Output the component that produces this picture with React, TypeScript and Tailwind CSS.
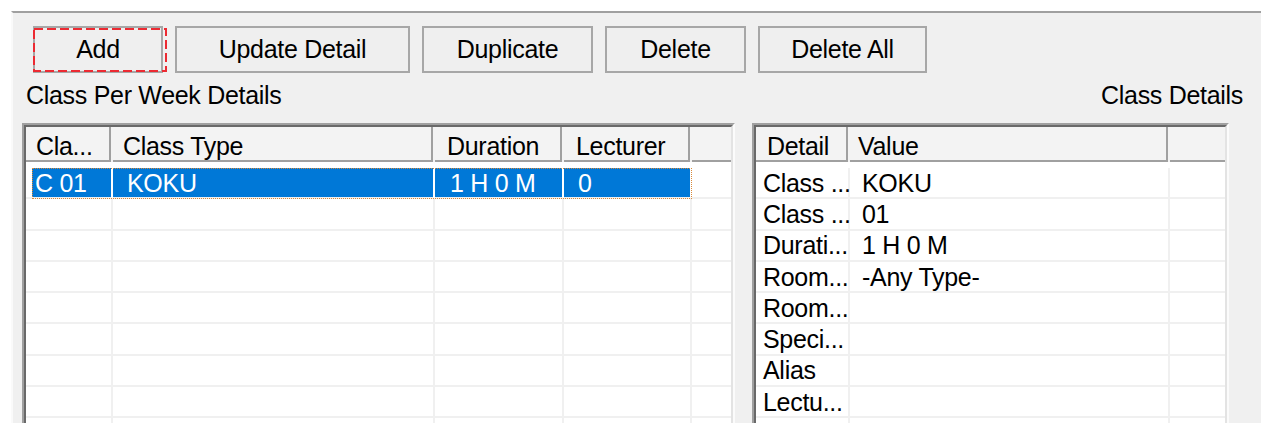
const GRID = 'border-[#f0f0f0]';

function ToolButton({ label, width }: { label: string; width: string }) {
  return (
    <button className={`${width} h-[47px] shrink-0 border-2 border-[#a7a7a7] bg-[#efefef] flex items-center justify-center whitespace-nowrap`}>
      {label}
    </button>
  );
}

function HeadCell({ label, width, pad }: { label: string; width: string; pad: string }) {
  return (
    <div className={`${width} shrink-0 flex pr-[2px]`}>
      <div className={`flex-1 flex items-center pt-[6px] border-r-2 border-b-2 border-[#a0a0a0] whitespace-nowrap ${pad}`}>
        {label}
      </div>
    </div>
  );
}

type Cell = { text: string; width: string; pad: string };

function LeftRow({ cells, selected }: { cells: Cell[]; selected?: boolean }) {
  return (
    <div className="flex h-[31.25px] shrink-0">
      <div className={`w-[6px] shrink-0 border-b-2 ${GRID}`} />
      <div className={`flex ${selected ? 'outline-1 outline-dotted outline-[#d8893a] -outline-offset-1' : ''}`}>
        {cells.map((c, i) => (
          <div
            key={i}
            className={`${c.width} shrink-0 flex items-center pt-[2px] whitespace-nowrap border-b-2 border-r-2 bg-clip-padding ${c.pad} ${
              selected ? 'bg-[#0078d7] text-white border-r-white border-b-[#f0f0f0]' : GRID
            }`}
          >
            {c.text}
          </div>
        ))}
      </div>
      <div className={`flex-1 border-b-2 ${GRID}`} />
    </div>
  );
}

function RightRow({ detail, value }: { detail: string; value: string }) {
  return (
    <div className="flex h-[31.25px] shrink-0">
      <div className={`w-[94px] shrink-0 flex items-center pt-[2px] pl-[7px] whitespace-nowrap border-b-2 border-r-2 ${GRID}`}>{detail}</div>
      <div className={`w-[320px] shrink-0 flex items-center pt-[2px] pl-[12px] whitespace-nowrap border-b-2 border-r-2 ${GRID}`}>{value}</div>
      <div className={`flex-1 border-b-2 ${GRID}`} />
    </div>
  );
}

const emptyLeft: Cell[] = [
  { text: '', width: 'w-[81px]', pad: 'pl-[3px]' },
  { text: '', width: 'w-[322px]', pad: 'pl-[14px]' },
  { text: '', width: 'w-[129px]', pad: 'pl-[14px]' },
  { text: '', width: 'w-[128px]', pad: 'pl-[14px]' },
];

const selectedLeft: Cell[] = [
  { text: 'C 01', width: 'w-[81px]', pad: 'pl-[3px]' },
  { text: 'KOKU', width: 'w-[322px]', pad: 'pl-[14px]' },
  { text: '1 H 0 M', width: 'w-[129px]', pad: 'pl-[15px]' },
  { text: '0', width: 'w-[128px]', pad: 'pl-[14px]' },
];

const details: [string, string][] = [
  ['Class ...', 'KOKU'],
  ['Class ...', '01'],
  ['Durati...', '1 H 0 M'],
  ['Room...', '-Any Type-'],
  ['Room...', ''],
  ['Speci...', ''],
  ['Alias', ''],
  ['Lectu...', ''],
  ['', ''],
];

export default function App() {
  return (
    <div className="min-h-screen bg-white pt-[11px] pl-[11px] font-['Liberation_Sans',Arial,sans-serif] text-[25px] tracking-[-0.3px] text-black">
      <div className="w-[1250px] h-[412px] bg-[#f0f0f0] border-t-2 border-t-[#a0a0a0] border-l-2 border-l-[#fafafa] pl-[9px] flex flex-col overflow-hidden">
        {/* Toolbar */}
        <div className="relative flex gap-[12px] pl-[11px] mt-[13px]">
          <ToolButton label="Add" width="w-[130px]" />
          <ToolButton label="Update Detail" width="w-[235px]" />
          <ToolButton label="Duplicate" width="w-[171px]" />
          <ToolButton label="Delete" width="w-[141px]" />
          <ToolButton label="Delete All" width="w-[169px]" />
          {/* highlight marker */}
          <svg className="absolute left-[11px] top-[2px] pointer-events-none" width="134" height="44" viewBox="0 0 134 44">
            <rect x="1" y="1" width="132" height="42" fill="none" stroke="#ec2a32" strokeWidth="2" strokeDasharray="9 4" />
          </svg>
        </div>

        {/* Labels */}
        <div className="h-[50px] shrink-0 flex items-center justify-between pl-[4px] pr-[18px] pb-[4px]">
          <span>Class Per Week Details</span>
          <span>Class Details</span>
        </div>

        {/* Lists */}
        <div className="flex-1 min-h-0 flex gap-[17px]">
          <div className="w-[713px] shrink-0 border-t-2 border-l-2 border-[#a0a0a0] border-r-2 border-r-[#fbfbfb] overflow-hidden">
            <div className="h-full bg-white border-t-2 border-l-2 border-[#696969] border-r-2 border-r-[#e3e3e3] flex flex-col overflow-hidden">
              <div className="flex h-[35px] shrink-0 bg-[#f3f3f3]">
                <HeadCell label="Cla..." width="w-[87px]" pad="pl-[10px]" />
                <HeadCell label="Class Type" width="w-[322px]" pad="pl-[10px]" />
                <HeadCell label="Duration" width="w-[129px]" pad="pl-[12px]" />
                <HeadCell label="Lecturer" width="w-[128px]" pad="pl-[12px]" />
                <div className="flex-1 border-b-2 border-[#a0a0a0]" />
              </div>
              <div className="h-[6px] shrink-0" />
              <LeftRow cells={selectedLeft} selected />
              {[0, 1, 2, 3, 4, 5, 6, 7].map((i) => (
                <LeftRow key={i} cells={emptyLeft} />
              ))}
            </div>
          </div>

          <div className="w-[477px] shrink-0 border-t-2 border-l-2 border-[#a0a0a0] border-r-2 border-r-[#fbfbfb] overflow-hidden">
            <div className="h-full bg-white border-t-2 border-l-2 border-[#696969] border-r-2 border-r-[#e3e3e3] flex flex-col overflow-hidden">
              <div className="flex h-[35px] shrink-0 bg-[#f3f3f3]">
                <HeadCell label="Detail" width="w-[94px]" pad="pl-[11px]" />
                <HeadCell label="Value" width="w-[320px]" pad="pl-[8px]" />
                <div className="flex-1 border-b-2 border-[#a0a0a0]" />
              </div>
              <div className="h-[6px] shrink-0" />
              {details.map(([d, v], i) => (
                <RightRow key={i} detail={d} value={v} />
              ))}
            </div>
          </div>
        </div>
      </div>
    </div>
  );
}
